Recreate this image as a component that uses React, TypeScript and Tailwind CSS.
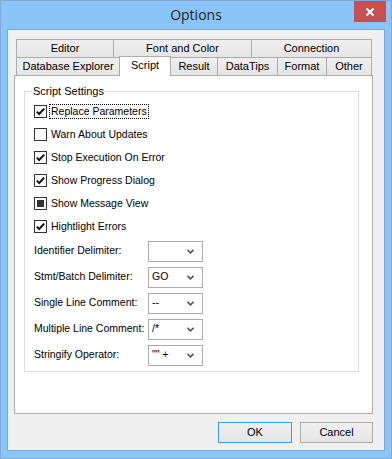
import React from 'react';

const row1 = [
  { label: 'Editor', w: 'w-[98px]' },
  { label: 'Font and Color', w: 'w-[139px]' },
  { label: 'Connection', w: 'w-[121px]' },
];

const row2 = [
  { label: 'Database Explorer', w: 'w-[104px]' },
  { label: 'Script', w: 'w-[52px]', active: true },
  { label: 'Result', w: 'w-[48px]' },
  { label: 'DataTips', w: 'w-[61px]' },
  { label: 'Format', w: 'w-[50px]' },
  { label: 'Other', w: 'w-[46px]' },
];

const checks: { label: string; state: 'on' | 'off' | 'mixed'; focus?: boolean }[] = [
  { label: 'Replace Parameters', state: 'on', focus: true },
  { label: 'Warn About Updates', state: 'off' },
  { label: 'Stop Execution On Error', state: 'on' },
  { label: 'Show Progress Dialog', state: 'on' },
  { label: 'Show Message View', state: 'mixed' },
  { label: 'Hightlight Errors', state: 'on' },
];

const combos = [
  { label: 'Identifier Delimiter:', value: '' },
  { label: 'Stmt/Batch Delimiter:', value: 'GO' },
  { label: 'Single Line Comment:', value: '--' },
  { label: 'Multiple Line Comment:', value: '/*' },
  { label: 'Stringify Operator:', value: '"" +' },
];

const CheckBox = ({ state }: { state: 'on' | 'off' | 'mixed' }) => (
  <div className="w-[13px] h-[13px] border border-[#333333] bg-white flex items-center justify-center shrink-0">
    {state === 'on' && (
      <svg width="11" height="11" viewBox="0 0 11 11">
        <path d="M1.8 5.6 L4.2 8 L9.2 2.6" fill="none" stroke="#111" strokeWidth="2" />
      </svg>
    )}
    {state === 'mixed' && <div className="w-[7px] h-[7px] bg-[#333333]" />}
  </div>
);

const Chevron = () => (
  <svg width="7" height="5" viewBox="0 0 7 5">
    <path d="M0.5 0.8 L3.5 3.8 L6.5 0.8" fill="none" stroke="#555" strokeWidth="1.6" />
  </svg>
);

export default function App() {
  return (
    <div
      className="relative w-[392px] h-[459px] border border-[#7aabd9] bg-[#8bc5f8] flex flex-col text-black"
      style={{ fontFamily: '"Liberation Sans", Arial, sans-serif' }}
    >
      {/* Title bar */}
      <div className="h-[28px] flex items-center justify-center">
        <span className="text-[14px] text-[#222] pb-[2px]" style={{ fontFamily: '"Open Sans", sans-serif' }}>
          Options
        </span>
      </div>
      <div className="absolute top-0 right-[5px] w-[32px] h-[21px] bg-[#c75050] flex items-center justify-center">
        <svg width="10" height="10" viewBox="0 0 10 10">
          <path d="M1.5 1.5 L8.5 8.5 M8.5 1.5 L1.5 8.5" stroke="#fff" strokeWidth="2" />
        </svg>
      </div>

      {/* Client area */}
      <div className="mx-[6px] h-[422px] border border-[#79a9d6] bg-[#f0f0f0] pt-[9px] pl-[6px] flex flex-col text-[11px]">
        {/* Tabs */}
        <div className="flex h-[18px] ml-[2px]">
          {row1.map((t, i) => (
            <div
              key={t.label}
              className={`${t.w} ${i > 0 ? '-ml-px' : ''} h-[18px] border-t border-l border-r border-[#acacac] bg-gradient-to-b from-[#f0f0f0] to-[#e5e5e5] flex items-center justify-center`}
            >
              {t.label}
            </div>
          ))}
        </div>
        <div className="flex items-end h-[18px] ml-[2px]">
          {row2.map((t, i) =>
            t.active ? (
              <div
                key={t.label}
                className={`${t.w} -ml-px relative z-10 h-[20px] -mb-px border-t border-l border-r border-[#acacac] bg-white flex items-center justify-center pb-[2px]`}
              >
                {t.label}
              </div>
            ) : (
              <div
                key={t.label}
                className={`${t.w} ${i > 0 ? '-ml-px' : ''} h-[18px] border-t border-l border-r border-[#acacac] bg-gradient-to-b from-[#f0f0f0] to-[#e5e5e5] flex items-center justify-center`}
              >
                {t.label}
              </div>
            )
          )}
        </div>

        {/* Panel */}
        <div className="w-[359px] h-[339px] border border-[#acacac] bg-white pt-[9px] pl-[9px]">
          <fieldset className="w-[335px] h-[287px] border border-[#dcdcdc] px-[9px]">
            <legend className="-ml-[2px] px-[1px] leading-[13px]">Script Settings</legend>
            <div className="flex flex-col mt-[2px] text-[10.5px]">
              {checks.map((c) => (
                <div key={c.label} className="h-[23px] flex items-center">
                  <CheckBox state={c.state} />
                  <span
                    className={`ml-[2px] px-[1px] leading-[13px] whitespace-nowrap ${c.focus ? 'border border-dotted border-black' : 'border border-transparent'}`}
                  >
                    {c.label}
                  </span>
                </div>
              ))}
              {combos.map((c) => (
                <div key={c.label} className="h-[26px] flex items-center">
                  <span className="w-[114px] shrink-0 whitespace-nowrap">{c.label}</span>
                  <div className="w-[55px] h-[21px] border border-[#acacac] bg-white flex items-center justify-between pl-[3px] pr-[8px]">
                    <span className="whitespace-pre">{c.value}</span>
                    <Chevron />
                  </div>
                </div>
              ))}
            </div>
          </fieldset>
        </div>

        {/* Buttons */}
        <div className="w-[359px] flex justify-end gap-[8px] mt-[8px]">
          <button className="w-[74px] h-[21px] border border-[#3399ff] bg-gradient-to-b from-[#f0f0f0] to-[#e5e5e5] text-[11px]">
            OK
          </button>
          <button className="w-[73px] h-[21px] border border-[#acacac] bg-gradient-to-b from-[#f0f0f0] to-[#e5e5e5] text-[11px]">
            Cancel
          </button>
        </div>
      </div>
    </div>
  );
}
